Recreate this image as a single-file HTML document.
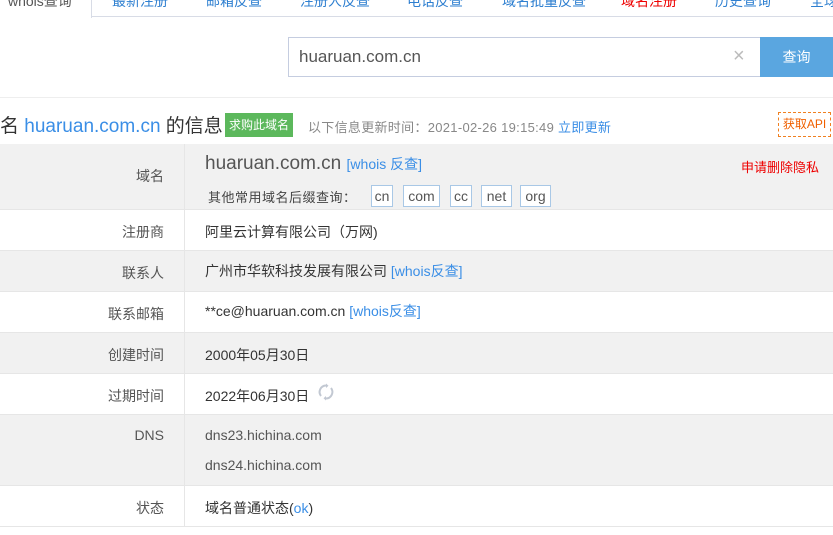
<!DOCTYPE html>
<html><head><meta charset="utf-8"><style>
*{margin:0;padding:0;box-sizing:border-box}
body{width:833px;height:535px;overflow:hidden;background:#fff;font-family:"Liberation Sans","Noto Sans CJK SC",sans-serif;position:relative;color:#333}
.a{position:absolute;white-space:nowrap}
.tab{position:absolute;top:-9px;font-size:14px;color:#2e7fd0;white-space:nowrap}
.row{position:absolute;left:0;width:833px;border-bottom:1px solid #e6e6e6}
.g{background:#f1f1f1}
.lab{position:absolute;right:669px;font-size:14px;color:#555;white-space:nowrap}
.val{position:absolute;left:205px;font-size:14px;color:#333;white-space:nowrap}
.bl{color:#3a8ee6}
.sfx{position:absolute;top:185px;border:1px solid #a9c8e6;height:22px;line-height:20px;font-size:14px;color:#555;background:#fff;text-align:center}
</style></head><body>
<div class="a" style="left:0;top:16px;width:833px;border-top:1px solid #d8dce6"></div>
<div class="a" style="left:0;top:0;width:92px;height:18px;background:#fff;border-right:1px solid #d8dce6"></div>
<div class="tab" style="left:8px;color:#555">whois查询</div>
<div class="tab" style="left:112px">最新注册</div>
<div class="tab" style="left:206px">邮箱反查</div>
<div class="tab" style="left:300px">注册人反查</div>
<div class="tab" style="left:407px">电话反查</div>
<div class="tab" style="left:502px">域名批量反查</div>
<div class="tab" style="left:621px;color:#e00">域名注册</div>
<div class="tab" style="left:715px">历史查询</div>
<div class="tab" style="left:810px">全球</div>

<div class="a" style="left:288px;top:37px;width:473px;height:40px;border:1px solid #c5cde0"></div>
<div class="a" style="left:299px;top:47px;font-size:17px;color:#555">huaruan.com.cn</div>
<div class="a" style="left:733px;top:44px;font-size:20px;color:#bbb;line-height:24px">×</div>
<div class="a" style="left:760px;top:37px;width:73px;height:40px;background:#5aa6e0;color:#fff;font-size:14px;text-align:center;line-height:40px">查询</div>
<div class="a" style="left:0;top:97px;width:833px;border-top:1px solid #eee"></div>

<div class="a" style="left:0;top:111px;font-size:19px;color:#333">名 <span class="bl">huaruan.com.cn</span> 的信息</div>
<div class="a" style="left:225px;top:113px;width:68px;height:24px;background:#5cb85c;color:#fff;font-size:12px;text-align:center;line-height:24px">求购此域名</div>
<div class="a" style="left:308px;top:117px;font-size:13px;color:#888;letter-spacing:0.3px">以下信息更新时间：2021-02-26 19:15:49 <span class="bl">立即更新</span></div>
<div class="a" style="left:778px;top:112px;width:53px;height:25px;border:1px dashed #f08020;color:#f06000;font-size:12px;text-align:center;line-height:23px">获取API</div>

<div class="row g" style="top:144px;height:66px"></div>
<div class="row" style="top:210px;height:41px"></div>
<div class="row g" style="top:251px;height:41px"></div>
<div class="row" style="top:292px;height:41px"></div>
<div class="row g" style="top:333px;height:41px"></div>
<div class="row" style="top:374px;height:41px"></div>
<div class="row g" style="top:415px;height:71px"></div>
<div class="row" style="top:486px;height:41px"></div>
<div class="a" style="left:184px;top:144px;width:1px;height:382px;background:#e6e6e6"></div>

<div class="lab" style="top:166px">域名</div>
<div class="val" style="top:153px;font-size:19px;color:#555">huaruan.com.cn <span class="bl" style="font-size:14px">[whois 反查]</span></div>
<div class="a" style="left:741px;top:157px;font-size:13px;color:#e00">申请删除隐私</div>
<div class="val" style="top:187px;left:208px;font-size:13px;color:#444;letter-spacing:0.5px">其他常用域名后缀查询：</div>
<div class="sfx" style="left:371px;width:22px">cn</div>
<div class="sfx" style="left:403px;width:37px">com</div>
<div class="sfx" style="left:450px;width:22px">cc</div>
<div class="sfx" style="left:481px;width:31px">net</div>
<div class="sfx" style="left:520px;width:31px">org</div>

<div class="lab" style="top:222px">注册商</div>
<div class="val" style="top:222px">阿里云计算有限公司（万网)</div>
<div class="lab" style="top:263px">联系人</div>
<div class="val" style="top:261px">广州市华软科技发展有限公司 <span class="bl">[whois反查]</span></div>
<div class="lab" style="top:304px">联系邮箱</div>
<div class="val" style="top:301px">**ce@huaruan.com.cn <span class="bl">[whois反查]</span></div>
<div class="lab" style="top:345px">创建时间</div>
<div class="val" style="top:345px">2000年05月30日</div>
<div class="lab" style="top:386px">过期时间</div>
<div class="val" style="top:386px">2022年06月30日</div>
<svg class="a" style="left:317px;top:383px" width="18" height="18" viewBox="0 0 18 18"><path d="M4 13A6.5 6.5 0 0 1 9 2.5M14 5A6.5 6.5 0 0 1 9 15.5" fill="none" stroke="#c2c8d2" stroke-width="2"/><path d="M9 0.5L11.5 2.8L9 5zM9 13L6.5 15.3L9 17.5z" fill="#c2c8d2"/></svg>
<div class="lab" style="top:427px">DNS</div>
<div class="val" style="top:427px;color:#555">dns23.hichina.com</div>
<div class="val" style="top:457px;color:#555">dns24.hichina.com</div>
<div class="lab" style="top:498px">状态</div>
<div class="val" style="top:498px">域名普通状态(<span class="bl">ok</span>)</div>
</body></html>
